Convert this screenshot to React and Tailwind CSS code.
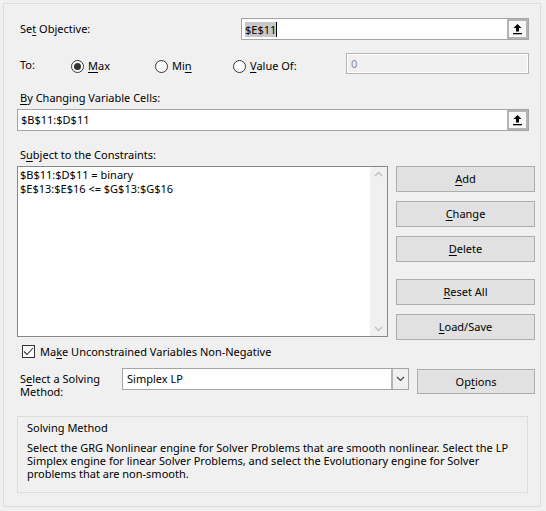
import React from 'react';

const U = ({ children }) => <span className="underline underline-offset-2">{children}</span>;

const RefButton = () => (
  <div className="w-[21px] h-full border-2 border-[#b4b4b4] bg-[#f7f7f7] flex items-center justify-center">
    <svg width="11" height="12" viewBox="0 0 11 12">
      <path d="M5.5 1 L1.5 5 H4 V8.5 H7 V5 H9.5 Z" fill="#000" />
      <rect x="1" y="10" width="9" height="1.3" fill="#000" />
    </svg>
  </div>
);

const Radio = ({ checked }) => (
  <span className="w-[13px] h-[13px] rounded-full border border-[#333] bg-white flex items-center justify-center">
    {checked && <span className="w-[7px] h-[7px] rounded-full bg-[#333]"></span>}
  </span>
);

const Btn = ({ children, className = '' }) => (
  <div className={`w-[139px] h-[26px] bg-[#e1e1e1] border border-[#adadad] flex items-center justify-center text-[#000] ${className}`}>
    {children}
  </div>
);

export default function App() {
  return (
    <div
      className="w-[546px] h-[511px] bg-[#f0f0f0] pt-[3px] pl-[3px] text-[11px] text-black leading-[16px]"
      style={{ fontFamily: '"Segoe UI", "Noto Sans", sans-serif' }}
    >
      <div className="w-[538px] h-[504px] border border-[#dcdcdc] pl-[13px]">
        {/* Set Objective */}
        <div className="mt-[14px] h-[22px] flex items-center">
          <div className="ml-[3px] w-[221px]">Se<U>t</U> Objective:</div>
          <div className="w-[288px] h-[22px] border border-[#a5a5a5] bg-white flex items-stretch">
            <div className="flex-1 flex items-center pl-[3px]">
              <span className="bg-[#c8c8c8] leading-[15px]">$E$11</span>
              <span className="w-[1px] h-[15px] bg-black"></span>
            </div>
            <RefButton />
          </div>
        </div>

        {/* To */}
        <div className="mt-[13px] h-[21px] flex items-center">
          <div className="ml-[3px] w-[51px] pt-[2px]">To:</div>
          <div className="w-[84px] flex items-center gap-[4px] pt-[5px]">
            <Radio checked />
            <span><U>M</U>ax</span>
          </div>
          <div className="w-[78px] flex items-center gap-[4px] pt-[5px]">
            <Radio />
            <span>Mi<U>n</U></span>
          </div>
          <div className="w-[113px] flex items-center gap-[4px] pt-[5px]">
            <Radio />
            <span><U>V</U>alue Of:</span>
          </div>
          <div className="w-[183px] h-[21px] border border-[#b4b4b4] bg-white p-[1px]">
            <div className="w-full h-full bg-[#f0f0f0] text-[#8a8a8a] pl-[3px] leading-[17px]">0</div>
          </div>
        </div>

        {/* By Changing */}
        <div className="mt-[16px] h-[16px] ml-[3px]"><U>B</U>y Changing Variable Cells:</div>
        <div className="mt-[3px] w-[512px] h-[22px] border border-[#a5a5a5] bg-white flex items-stretch">
          <div className="flex-1 flex items-center pl-[3px]">$B$11:$D$11</div>
          <RefButton />
        </div>

        {/* Constraints */}
        <div className="mt-[16px] h-[16px] ml-[3px]">S<U>u</U>bject to the Constraints:</div>
        <div className="mt-[3px] h-[174px] flex gap-[8px]">
          <div className="w-[371px] h-[171px] border border-[#828790] bg-white flex">
            <div className="flex-1 pl-[2px] pt-[1px] leading-[14px]">
              <div>$B$11:$D$11 = binary</div>
              <div>$E$13:$E$16 &lt;= $G$13:$G$16</div>
            </div>
            <div className="w-[17px] bg-[#f0f0f0] flex flex-col justify-between items-center py-[4px]">
              <svg width="9" height="6" viewBox="0 0 9 6">
                <path d="M1 5 L4.5 1.5 L8 5" stroke="#c2c2c2" strokeWidth="1.5" fill="none" />
              </svg>
              <svg width="9" height="6" viewBox="0 0 9 6">
                <path d="M1 1 L4.5 4.5 L8 1" stroke="#c2c2c2" strokeWidth="1.5" fill="none" />
              </svg>
            </div>
          </div>
          <div className="flex flex-col">
            <Btn><U>A</U>dd</Btn>
            <Btn className="mt-[9px]"><U>C</U>hange</Btn>
            <Btn className="mt-[9px]"><U>D</U>elete</Btn>
            <Btn className="mt-[17px]"><U>R</U>eset All</Btn>
            <Btn className="mt-[9px]"><U>L</U>oad/Save</Btn>
          </div>
        </div>

        {/* Checkbox */}
        <div className="mt-[5px] h-[13px] flex items-center ml-[5px] gap-[5px]">
          <span className="w-[13px] h-[13px] border border-[#333] bg-white flex items-center justify-center">
            <svg width="11" height="9" viewBox="0 0 11 9">
              <path d="M1 4.5 L4 7.5 L10 1" stroke="#333" strokeWidth="1.1" fill="none" />
            </svg>
          </span>
          <span>Ma<U>k</U>e Unconstrained Variables Non-Negative</span>
        </div>

        {/* Solving method select */}
        <div className="mt-[10px] h-[26px] flex items-start">
          <div className="ml-[3px] w-[102px] pt-[4px] leading-[13px]">
            S<U>e</U>lect a Solving<br />Method:
          </div>
          <div className="w-[287px] h-[22px] border border-[#a5a5a5] bg-white flex items-stretch">
            <div className="flex-1 flex items-center pl-[4px]">Simplex LP</div>
            <div className="w-[17px] border-l-2 border-[#b4b4b4] bg-[#f0f0f0] flex items-center justify-center">
              <svg width="9" height="6" viewBox="0 0 9 6">
                <path d="M1 1 L4.5 4.5 L8 1" stroke="#444" strokeWidth="1.2" fill="none" />
              </svg>
            </div>
          </div>
          <div className="ml-[8px] mt-[1px] w-[118px] h-[25px] bg-[#e1e1e1] border border-[#adadad] flex items-center justify-center">
            Op<U>t</U>ions
          </div>
        </div>

        {/* Group box */}
        <div className="mt-[22px] w-[511px] h-[77px] border border-[#dcdcdc] px-[9px] pt-[3px]">
          <div className="h-[16px]">Solving Method</div>
          <div className="mt-[5px] leading-[13px] whitespace-nowrap">
            Select the GRG Nonlinear engine for Solver Problems that are smooth nonlinear. Select the LP<br />
            Simplex engine for linear Solver Problems, and select the Evolutionary engine for Solver<br />
            problems that are non-smooth.
          </div>
        </div>
      </div>
    </div>
  );
}
